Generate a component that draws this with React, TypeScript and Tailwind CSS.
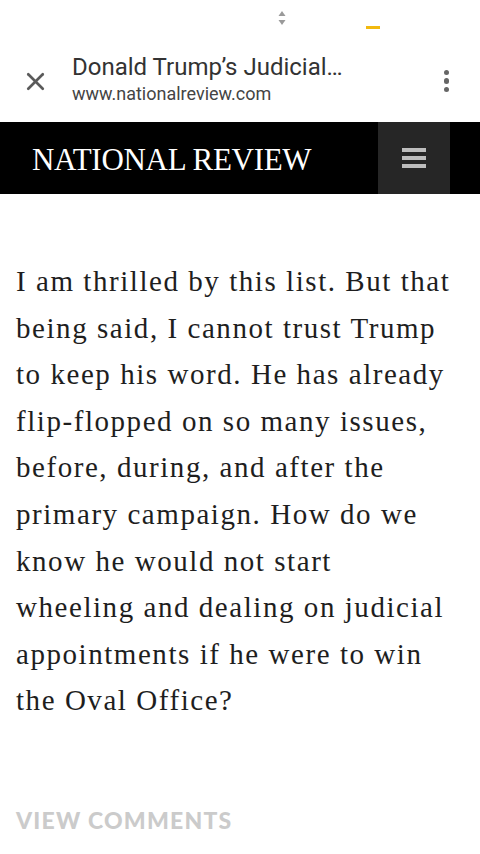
import { X } from "lucide-react";

const lines = [
  "I am thrilled by this list. But that",
  "being said, I cannot trust Trump",
  "to keep his word. He has already",
  "flip-flopped on so many issues,",
  "before, during, and after the",
  "primary campaign. How do we",
  "know he would not start",
  "wheeling and dealing on judicial",
  "appointments if he were to win",
  "the Oval Office?",
];

function StatusBar() {
  return (
    <div className="h-[40px] relative bg-white">
      <svg className="absolute left-[278px] top-[10px]" width="8" height="16" viewBox="0 0 8 16">
        <path d="M4 1 L7.5 6 L0.5 6 Z" fill="#9a9a9a" />
        <path d="M4 15 L7.5 10 L0.5 10 Z" fill="#9a9a9a" />
      </svg>
      <div className="absolute left-[366px] top-[26px] w-[14px] h-[3px] bg-[#f2b90f]" />
    </div>
  );
}

function Toolbar() {
  return (
    <div className="h-[82px] flex items-center bg-white" style={{ fontFamily: "Roboto, 'Liberation Sans', sans-serif" }}>
      <div className="w-[72px] flex justify-center pr-[1px]">
        <X className="size-[29px] text-[#5a5a5a]" strokeWidth={2.2} />
      </div>
      <div className="flex-1 flex flex-col pb-[3px]">
        <div className="text-[24px] leading-[29px] text-[#333]">Donald Trump’s Judicial…</div>
        <div className="text-[18px] leading-[24px] text-[#444]">www.nationalreview.com</div>
      </div>
      <div className="w-[68px] flex flex-col items-center gap-[3px] pl-[1px]">
        <span className="size-[5.5px] rounded-full bg-[#666]" />
        <span className="size-[5.5px] rounded-full bg-[#666]" />
        <span className="size-[5.5px] rounded-full bg-[#666]" />
      </div>
    </div>
  );
}

function Masthead() {
  return (
    <div className="h-[72px] bg-black flex items-stretch">
      <div className="flex-1 flex items-center pl-[32px]">
        <span
          className="text-white text-[31px] tracking-[-0.3px] leading-none pt-[2px]"
          style={{ fontFamily: "'Liberation Serif', serif" }}
        >
          NATIONAL REVIEW
        </span>
      </div>
      <div className="w-[72px] bg-[#262626] flex flex-col items-center justify-center gap-[4.5px]">
        <span className="w-[24px] h-[3.5px] bg-[#bdbdbd]" />
        <span className="w-[24px] h-[3.5px] bg-[#bdbdbd]" />
        <span className="w-[24px] h-[3.5px] bg-[#bdbdbd]" />
      </div>
      <div className="w-[30px]" />
    </div>
  );
}

export default function App() {
  return (
    <div className="w-[480px] h-[854px] bg-white overflow-hidden">
      <StatusBar />
      <Toolbar />
      <Masthead />
      <main className="px-[16px] pt-[64px]">
        <div
          className="text-[29px] leading-[46.6px] tracking-[1.55px] text-[#1e1e1e]"
          style={{ fontFamily: "'Liberation Serif', serif" }}
        >
          {lines.map((l) => (
            <div key={l} className="whitespace-nowrap">{l}</div>
          ))}
        </div>
        <div
          className="mt-[81px] text-[23px] leading-[30px] font-black text-[#cbcbcb] tracking-[1.2px]"
          style={{ fontFamily: "Lato, 'Liberation Sans', sans-serif" }}
        >
          VIEW COMMENTS
        </div>
      </main>
    </div>
  );
}
